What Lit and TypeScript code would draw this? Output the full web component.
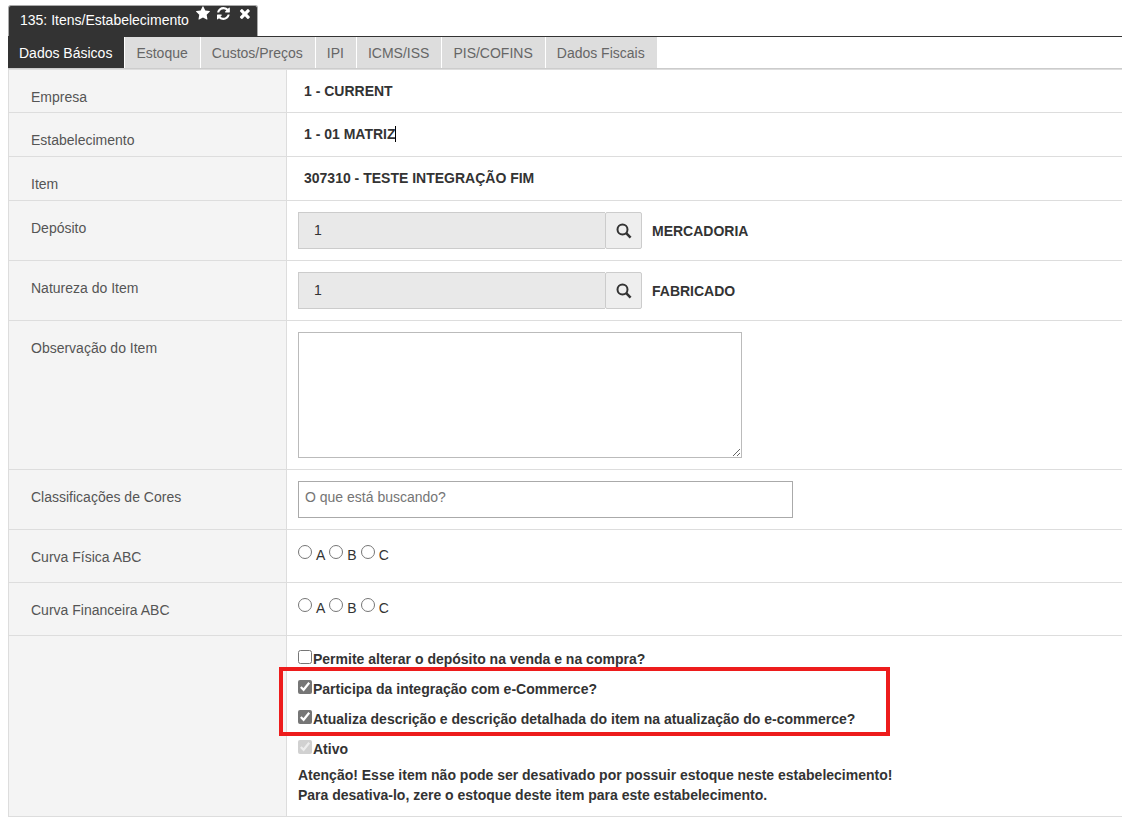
import { LitElement, html, css, svg } from "lit";
import { customElement } from "lit/decorators.js";

const star = svg`<path d="M1664 647q0 22-26 48l-363 354 86 500q1 7 1 20 0 21-10.5 35.5t-30.5 14.5q-19 0-40-12l-449-236-449 236q-22 12-40 12-21 0-31.5-14.5t-10.5-35.5q0-6 2-20l86-500-364-354q-25-27-25-48 0-37 56-46l502-73 225-455q19-41 49-41t49 41l225 455 502 73q56 9 56 46z"/>`;
const refresh = svg`<path d="M1511 1056q0 5-1 7-64 268-268 434.5t-478 166.5q-146 0-282.5-55t-243.5-157l-129 129q-19 19-45 19t-45-19-19-45v-448q0-26 19-45t45-19h448q26 0 45 19t19 45-19 45l-137 137q71 66 161 102t187 36q134 0 250-65t186-179q11-17 53-117 8-23 30-23h192q13 0 22.5 9.5t9.5 22.5zm25-800v448q0 26-19 45t-45 19h-448q-26 0-45-19t-19-45 19-45l138-138q-148-137-349-137-134 0-250 65t-186 179q-11 17-53 117-8 23-30 23h-199q-13 0-22.5-9.5t-9.5-22.5v-7q65-268 270-434.5t480-166.5q146 0 284 55.5t245 156.5l130-129q19-19 45-19t45 19 19 45z"/>`;
const close = svg`<path d="M1298 1322q0 40-28 68l-136 136q-28 28-68 28t-68-28l-294-294-294 294q-28 28-68 28t-68-28l-136-136q-28-28-28-68t28-68l294-294-294-294q-28-28-28-68t28-68l136-136q28-28 68-28t68 28l294 294 294-294q28-28 68-28t68 28l136 136q28 28 28 68t-28 68l-294 294 294 294q28 28 28 68z"/>`;

@customElement("app-root")
export class AppRoot extends LitElement {
  static styles = css`
    :host {
      display: block;
      padding: 5px 0 0 8px;
      background: #fff;
      color: #333;
      font: 14px/20px "Liberation Sans", Arial, sans-serif;
    }
    * { box-sizing: border-box; }
    button, input, textarea { font: inherit; color: inherit; margin: 0; }

    .window-bar { display: flex; border-bottom: 1px solid #333; }
    .window-tab {
      display: flex;
      align-items: flex-start;
      gap: 7px;
      height: 31px;
      padding: 0 5px 0 11px;
      border: 1px solid #aaa;
      border-bottom: 0;
      border-radius: 3px 3px 0 0;
      background: #333;
      color: #fff;
    }
    .window-title { padding-top: 4px; }
    .actions { display: flex; gap: 7px; }
    .action {
      display: flex;
      justify-content: center;
      width: 14px;
      padding: 0;
      border: 0;
      background: none;
      color: #fff;
    }
    .action svg { height: 15px; flex: none; fill: currentColor; }

    .tabs { display: flex; gap: 1px; border-bottom: 1px solid #ccc; }
    .tab {
      padding: 6px 12px 5px 11px;
      border: 0;
      background: #ddd;
      color: #666;
    }
    .tab.active { background: #333; color: #fff; }

    .form { border-left: 1px solid #ddd; }
    .row {
      display: grid;
      grid-template-columns: 278px 1fr;
      border-bottom: 1px solid #ddd;
    }
    .row:first-child { border-top: 1px solid #ddd; }
    .name {
      padding: 17px 22px 5px;
      border-right: 1px solid #ddd;
      background: #f4f4f4;
      color: #555;
    }
    .cell { padding: 11px; }
    .text { padding-bottom: 12px; }
    .row:first-child .text { padding-bottom: 11px; }
    .value { padding-left: 6px; font-weight: bold; }
    .caret { margin-left: -1px; border-left: 1px solid #000; }

    .lookup { display: flex; align-items: center; gap: 10px; font-weight: bold; }
    .group { display: flex; width: 344px; height: 37px; }
    .code {
      flex: 1;
      min-width: 0;
      padding: 0 15px 2px;
      border: 1px solid #ccc;
      border-right: 0;
      border-radius: 0;
      background: #e9e9e9;
      font-weight: normal;
    }
    .find {
      display: grid;
      place-items: center;
      width: 37px;
      padding: 0;
      border: 1px solid #ccc;
      border-radius: 2px;
      background: #eee;
    }
    .notes {
      display: block;
      width: 444px;
      height: 126px;
      border: 1px solid #bbb;
      resize: both;
    }
    .search {
      display: block;
      width: 495px;
      height: 37px;
      padding: 0 6px 6px;
      border: 1px solid #aaa;
    }
    .search::placeholder { color: #757575; }

    .radios { display: flex; gap: 4px; padding: 12px 11px 17px; }
    .option { display: flex; gap: 4px; }
    .option input { width: 14px; height: 14px; margin-top: 3px; }
    .option span { padding-top: 3px; }

    .options { padding: 5px 11px 11px; font-weight: bold; }
    .check { display: flex; gap: 1px; padding-top: 6px; }
    .check input {
      width: 14px;
      height: 14px;
      margin-top: 3px;
      accent-color: #767676;
    }
    .check span { line-height: 24px; }
    .marked { position: relative; width: fit-content; }
    .frame {
      position: absolute;
      inset: -4px -35px -5px -19px;
      border: 4px solid #ed1c1c;
      pointer-events: none;
    }
    .warning { margin: 4px 0 0; }
  `;

  private icon(w: number, shape: unknown) {
    return html`<svg viewBox="0 0 ${w} 1792" aria-hidden="true">${shape}</svg>`;
  }

  private lookup(id: string, name: string, text: string) {
    return html`<div class="row">
      <label class="name" for=${id}>${name}</label>
      <div class="cell lookup">
        <div class="group">
          <input class="code" id=${id} value="1" readonly />
          <button class="find" aria-label="Pesquisar">
            <svg width="16" height="16" viewBox="0 0 16 16" fill="none" stroke="#333" aria-hidden="true">
              <circle cx="6.5" cy="6.5" r="5" stroke-width="2" />
              <path d="M10.2 10.2 14.6 14.6" stroke-width="2.6" />
            </svg>
          </button>
        </div>
        <span>${text}</span>
      </div>
    </div>`;
  }

  private value(name: string, text: string, caret = false) {
    return html`<div class="row">
      <div class="name">${name}</div>
      <div class="cell text"><span class="value">${text}</span>${caret ? html`<span class="caret"></span>` : ""}</div>
    </div>`;
  }

  private curve(id: string, name: string) {
    return html`<div class="row" role="radiogroup" aria-labelledby=${id}>
      <div class="name" id=${id}>${name}</div>
      <div class="radios">
        ${["A", "B", "C"].map(
          (o) => html`<label class="option"><input type="radio" name=${id} /><span>${o}</span></label>`
        )}
      </div>
    </div>`;
  }

  private check(text: string, checked = false, disabled = false) {
    return html`<label class="check"
      ><input type="checkbox" .checked=${checked} ?disabled=${disabled} /><span>${text}</span></label
    >`;
  }

  render() {
    const tabs = ["Dados Básicos", "Estoque", "Custos/Preços", "IPI", "ICMS/ISS", "PIS/COFINS", "Dados Fiscais"];
    return html`
      <header class="window-bar">
        <div class="window-tab">
          <span class="window-title">135: Itens/Estabelecimento</span>
          <div class="actions">
            <button class="action" aria-label="Favorito">${this.icon(1664, star)}</button>
            <button class="action" aria-label="Atualizar">${this.icon(1536, refresh)}</button>
            <button class="action" aria-label="Fechar">${this.icon(1408, close)}</button>
          </div>
        </div>
      </header>
      <nav class="tabs">
        ${tabs.map((t, i) => html`<button class="tab ${i === 0 ? "active" : ""}">${t}</button>`)}
      </nav>
      <main class="form">
        ${this.value("Empresa", "1 - CURRENT")}
        ${this.value("Estabelecimento", "1 - 01 MATRIZ", true)}
        ${this.value("Item", "307310 - TESTE INTEGRAÇÃO FIM")}
        ${this.lookup("deposito", "Depósito", "MERCADORIA")}
        ${this.lookup("natureza", "Natureza do Item", "FABRICADO")}
        <div class="row">
          <label class="name" for="obs">Observação do Item</label>
          <div class="cell"><textarea class="notes" id="obs"></textarea></div>
        </div>
        <div class="row">
          <label class="name" for="cores">Classificações de Cores</label>
          <div class="cell"><input class="search" id="cores" placeholder="O que está buscando?" /></div>
        </div>
        ${this.curve("fisica", "Curva Física ABC")}
        ${this.curve("financeira", "Curva Financeira ABC")}
        <div class="row">
          <div class="name"></div>
          <div class="options">
            ${this.check("Permite alterar o depósito na venda e na compra?")}
            <div class="marked">
              ${this.check("Participa da integração com e-Commerce?", true)}
              ${this.check("Atualiza descrição e descrição detalhada do item na atualização do e-commerce?", true)}
              <div class="frame"></div>
            </div>
            ${this.check("Ativo", true, true)}
            <p class="warning">
              Atenção! Esse item não pode ser desativado por possuir estoque neste estabelecimento!<br />
              Para desativa-lo, zere o estoque deste item para este estabelecimento.
            </p>
          </div>
        </div>
      </main>
    `;
  }
}
